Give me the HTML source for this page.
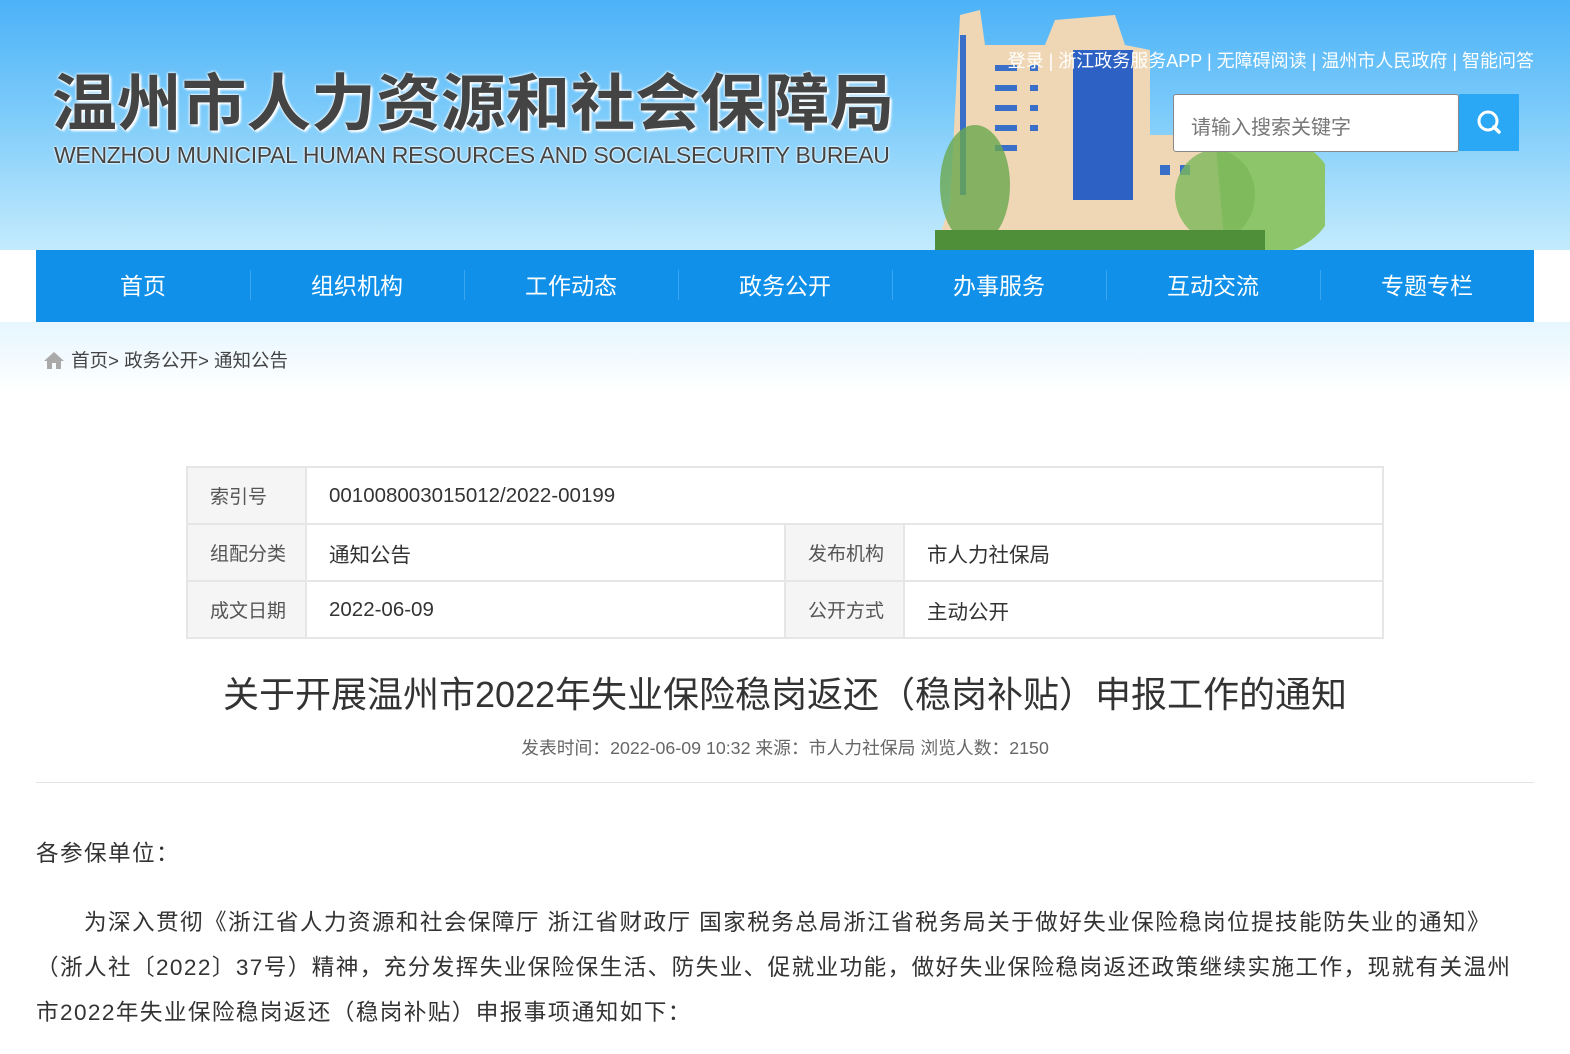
<!DOCTYPE html>
<html><head><meta charset="utf-8"><style>
*{margin:0;padding:0;box-sizing:border-box}
body{width:1570px;height:1054px;overflow:hidden;background:#fff;font-family:"Liberation Sans","Noto Sans CJK SC",sans-serif;position:relative;color:#333}
.hdr{position:absolute;left:0;top:0;width:1570px;height:250px;background:linear-gradient(180deg,#4cb2f7 0%,#7ccbfa 45%,#c4ebfd 100%)}
.t1{position:absolute;left:52px;top:58px;font-size:62px;line-height:80px;font-weight:bold;color:#444;white-space:nowrap;text-shadow:0 0 2px #fff,0 0 3px #fff,2px 2px 2px #fff;font-family:"Noto Sans CJK SC",sans-serif;transform:scaleX(1.045);transform-origin:left}
.t2{position:absolute;left:54px;top:142px;font-size:23px;color:#444;white-space:nowrap;text-shadow:0 0 2px #fff,0 0 2px #fff;letter-spacing:-0.3px}
.bld{position:absolute;left:935px;top:5px;width:390px;height:245px}
.top{position:absolute;right:36px;top:47px;font-size:18px;color:#fff}
.search{position:absolute;left:1173px;top:94px;width:286px;height:58px;background:#fff;border:1px solid #888;border-radius:3px;font-size:20px;color:#777;padding:16px 17px}
.sbtn{position:absolute;left:1459px;top:94px;width:60px;height:57px;background:#2aa8f5}
.nav{position:absolute;left:36px;top:250px;width:1498px;height:72px;background:#1090e8;display:flex}
.nav div{flex:1;text-align:center;color:#fff;font-size:23px;line-height:72px;position:relative}
.nav div+div:before{content:"";position:absolute;left:0;top:20px;height:30px;border-left:1px solid #3aa5f0}
.sub{position:absolute;left:0;top:322px;width:1570px;height:70px;background:linear-gradient(180deg,#e6f6ff,#fff)}
.bc{position:absolute;left:42px;top:347px;font-size:18.5px;color:#444}
table{position:absolute;left:186px;top:466px;width:1198px;border-collapse:collapse;font-size:20.5px;table-layout:fixed}
td{border:2px solid #e6e6e6;height:57px;padding:0 22px;color:#333;white-space:nowrap}
td.l{background:#f5f5f5;width:119px;color:#555;font-size:19px}
h1{position:absolute;left:0;width:1570px;top:666px;text-align:center;font-weight:normal;font-size:36px;color:#333}
.meta{position:absolute;left:0;width:1570px;top:734px;text-align:center;font-size:17.8px;color:#666}
.hr{position:absolute;left:36px;top:782px;width:1498px;border-top:1px solid #e5e5e5}
.p{position:absolute;left:36px;width:1520px;font-size:22.6px;color:#333;line-height:45px;white-space:nowrap;letter-spacing:1.4px}
</style></head><body>
<div class="hdr"></div>
<div class="t1">温州市人力资源和社会保障局</div>
<div class="t2">WENZHOU MUNICIPAL HUMAN RESOURCES AND SOCIALSECURITY BUREAU</div>
<svg class="bld" viewBox="0 0 390 245">
<ellipse cx="330" cy="190" rx="70" ry="60" fill="#8cc56a"/>
<path d="M25 10 L45 5 L50 40 L110 40 L120 15 L180 10 L190 40 L215 45 L215 130 L280 130 L290 245 L0 245 L15 200 Z" fill="#efd7b5"/>
<rect x="138" y="45" width="60" height="150" fill="#2d62c4"/>
<g fill="#3a6fc9"><rect x="60" y="60" width="22" height="6"/><rect x="60" y="80" width="22" height="6"/><rect x="60" y="100" width="22" height="6"/><rect x="60" y="120" width="22" height="6"/><rect x="60" y="140" width="22" height="6"/><rect x="95" y="60" width="8" height="6"/><rect x="95" y="80" width="8" height="6"/><rect x="95" y="100" width="8" height="6"/><rect x="95" y="120" width="8" height="6"/><rect x="25" y="30" width="6" height="160"/><rect x="225" y="160" width="10" height="10"/><rect x="245" y="160" width="10" height="10"/></g>
<ellipse cx="40" cy="180" rx="35" ry="60" fill="#6aa84f" opacity=".8"/>
<ellipse cx="280" cy="190" rx="40" ry="45" fill="#7cb85a" opacity=".8"/>
<rect x="0" y="225" width="330" height="20" fill="#4f8f3a"/>
</svg>
<div class="top">登录 | 浙江政务服务APP | 无障碍阅读 | 温州市人民政府 | 智能问答</div>
<div class="search">请输入搜索关键字</div>
<div class="sbtn"><svg width="60" height="57"><circle cx="29" cy="27" r="9" fill="none" stroke="#fff" stroke-width="3"/><line x1="35" y1="33" x2="40" y2="38" stroke="#fff" stroke-width="3.5" stroke-linecap="round"/></svg></div>
<div class="nav"><div>首页</div><div>组织机构</div><div>工作动态</div><div>政务公开</div><div>办事服务</div><div>互动交流</div><div>专题专栏</div></div>
<div class="sub"></div>
<div class="bc"><svg width="24" height="20" style="vertical-align:-3px"><path d="M2 11 L12 2 L22 11 L19 11 L19 19 L14 19 L14 13 L10 13 L10 19 L5 19 L5 11 Z" fill="#aaa"/></svg> 首页&gt; 政务公开&gt; 通知公告</div>
<table>
<colgroup><col style="width:119px"><col style="width:479px"><col style="width:119px"><col></colgroup>
<tr><td class="l">索引号</td><td colspan="3">001008003015012/2022-00199</td></tr>
<tr><td class="l">组配分类</td><td>通知公告</td><td class="l">发布机构</td><td>市人力社保局</td></tr>
<tr><td class="l">成文日期</td><td>2022-06-09</td><td class="l">公开方式</td><td>主动公开</td></tr>
</table>
<h1>关于开展温州市2022年失业保险稳岗返还（稳岗补贴）申报工作的通知</h1>
<div class="meta">发表时间：2022-06-09 10:32 来源：市人力社保局 浏览人数：2150</div>
<div class="hr"></div>
<div class="p" style="top:831px">各参保单位：</div>
<div class="p" style="top:900px">　　为深入贯彻《浙江省人力资源和社会保障厅 浙江省财政厅 国家税务总局浙江省税务局关于做好失业保险稳岗位提技能防失业的通知》<br>（浙人社〔2022〕37号）精神，充分发挥失业保险保生活、防失业、促就业功能，做好失业保险稳岗返还政策继续实施工作，现就有关温州<br>市2022年失业保险稳岗返还（稳岗补贴）申报事项通知如下：</div>
</body></html>
